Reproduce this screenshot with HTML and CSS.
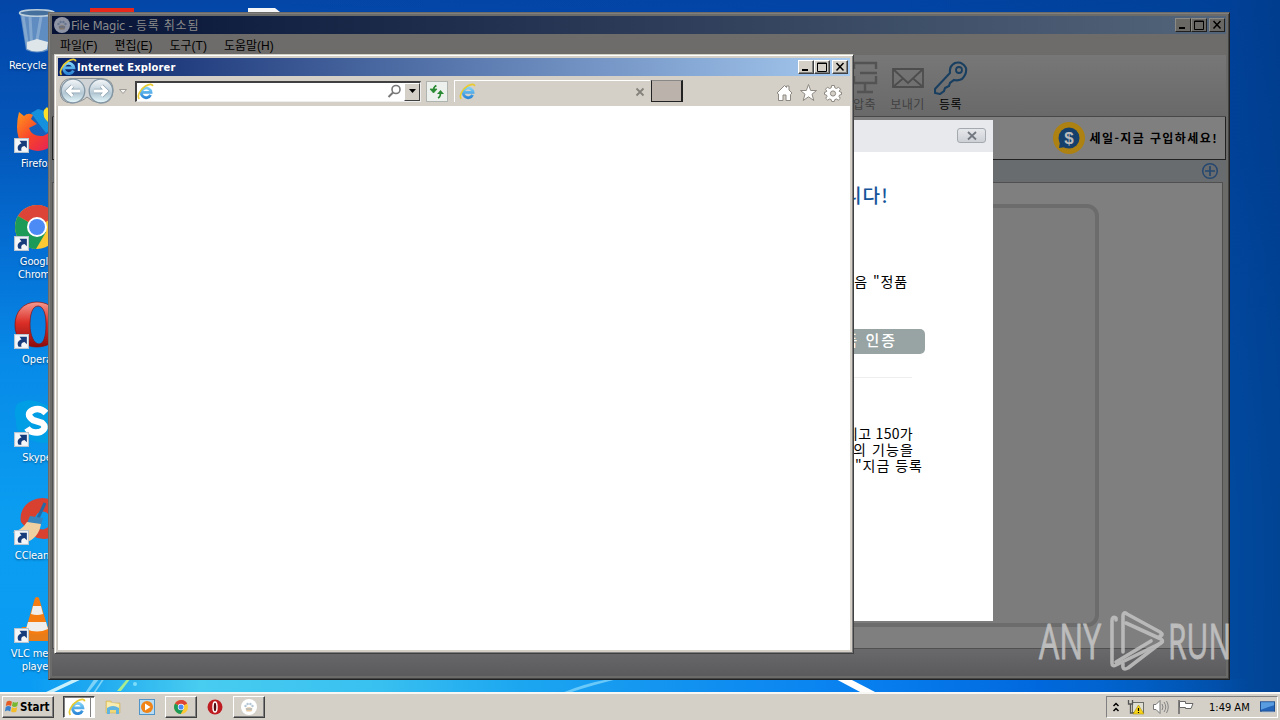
FILE: index.html
```html
<!DOCTYPE html>
<html lang="ko">
<head>
    <meta charset="UTF-8">
    <title>File Magic</title>
    <link rel="stylesheet" href="styles.css">
</head>
<body>
<svg width="0" height="0" class="defs">
    <defs>
        <linearGradient id="ieBlue" x1="0" y1="0" x2="0" y2="1"><stop offset="0" stop-color="#7cd0f8"/><stop offset="1" stop-color="#2c88d8"/></linearGradient>
        <linearGradient id="ball" x1="0" y1="0" x2="0" y2="1"><stop offset="0" stop-color="#f4f7f9"/><stop offset=".48" stop-color="#c3d2dc"/><stop offset=".6" stop-color="#b3c8d4"/><stop offset="1" stop-color="#e6f8fc"/></linearGradient>
        <linearGradient id="operaRed" x1="0" y1="0" x2="0" y2="1"><stop offset="0" stop-color="#f49a90"/><stop offset=".45" stop-color="#dc3028"/><stop offset="1" stop-color="#8c0c0c"/></linearGradient>
        <linearGradient id="fox" x1="0" y1="0" x2="1" y2="1"><stop offset="0" stop-color="#ff9a1c"/><stop offset=".5" stop-color="#f8402c"/><stop offset="1" stop-color="#e01c60"/></linearGradient>
    </defs>
    <symbol id="ie" viewBox="0 0 16 16">
        <path d="M12.8 11.2A4.6 4.6 0 1 1 13.2 8.8H5" fill="none" stroke="url(#ieBlue)" stroke-width="2.6"/>
        <path d="M2.2 15C-.2 13 2.6 6 8 2.8C11.5 .8 14.6 .6 14.8 3" fill="none" stroke="#e9cb30" stroke-width="1.5"/>
    </symbol>
    <symbol id="shortcut" viewBox="0 0 14 14">
        <rect x=".5" y=".5" width="13" height="13" fill="#f4f6f8" stroke="#b8c4d0"/>
        <path d="M4.3 12C2.4 8.6 4 5.8 7 5.2L5.2 2.5H12V9.5L9.8 7.4C7.2 7.8 6.2 9.4 7 12Z" fill="#173c7c"/>
    </symbol>
    <symbol id="chrome" viewBox="0 0 44 44">
        <circle cx="22" cy="22" r="22" fill="#fcc934"/>
        <path d="M22 22L3 11A22 22 0 0 1 41 11Z" fill="#dc4437"/>
        <path d="M22 0A22 22 0 0 1 41 11.5H22Z" fill="#dc4437"/>
        <path d="M3 11A22 22 0 0 0 21 44L31 27L22 22Z" fill="#1c9a58"/>
        <circle cx="22" cy="22" r="10" fill="#fff"/><circle cx="22" cy="22" r="8" fill="#4c8bf5"/>
    </symbol>
    <symbol id="paw" viewBox="0 0 16 16">
        <circle cx="8" cy="8" r="8" fill="#fff"/>
        <g fill="#b3c6d6"><circle cx="4.5" cy="7" r="1.2"/><circle cx="6.6" cy="5" r="1.2"/><circle cx="9.4" cy="5" r="1.2"/><circle cx="11.5" cy="7" r="1.2"/></g>
        <path d="M4.5 9.5Q8 7 11.5 9.5L10.5 12.5H5.5Z" fill="#e6c8a0"/><path d="M5 10H11" stroke="#9ab4c8"/>
    </symbol>
</svg>

<div class="desktop">
    <svg class="streaks" width="1280" height="16" viewBox="0 0 1280 16">
        <path d="M44 14L76 -1H84L52 14Z" fill="#c8f0fc"/><path d="M85 14L95 -1H100L88 14ZM93 14L103 -1H105L95 14Z" fill="#a4e4fa" opacity=".7"/>
        <path d="M117 12L128 -1H131L121 12Z" fill="#a8ec90"/><circle cx="135" cy="5" r="2" fill="#9cecfc" opacity=".7"/>
        <path d="M562 14Q585 4 615 -1H622Q592 6 569 14Z" fill="#8cdcfc" opacity=".7"/>
        <path d="M832 -2L862 14H877L850 0Z" fill="#fff"/>
    </svg>
    <svg class="peek" width="200" height="12" viewBox="0 0 200 12"><rect width="44" height="4" y="8" fill="#e8281c"/><path d="M158 8H185L190 12H158Z" fill="#f4f6f8"/></svg>

    <div class="shortcuts">
        <div class="shortcut">
            <svg width="48" height="48" viewBox="0 0 48 48"><path d="M7 7H41L36 44Q24 49 13 44Z" fill="#7098c4" opacity=".85"/><path d="M10 10L15 43M17 11L19 45M28 11L24 34" stroke="#c8dcec" stroke-width="3" opacity=".35"/><path d="M14 36L24 33L35 36L34 43Q24 48 14 43Z" fill="#dfe6ea"/><ellipse cx="24" cy="7" rx="17.5" ry="3.2" fill="#456f9c" stroke="#bdcfdd" stroke-width="1.5"/></svg>
            <span>Recycle Bin</span>
        </div>
        <div class="shortcut">
            <svg width="48" height="48" viewBox="0 0 48 48"><circle cx="27" cy="23" r="15" fill="#1460bc"/><path d="M18 9L25 5L39 9L42 23L33 29L26 20Z" fill="#1590dc"/><path d="M6 8L11 12Q15 8 20 11L18 15L24 20L16 24Q19 33 30 32Q38 30 40 18L44 22Q46 45 25 47Q4 45 4 23Q4 15 6 8Z" fill="url(#fox)"/><path d="M31 6Q29 13 35 18Q40 22 41 12L34 3Z" fill="#ffdf28"/></svg>
            <svg class="arrow" width="15" height="15"><use href="#shortcut"/></svg>
            <span>Firefox</span>
        </div>
        <div class="shortcut">
            <svg width="48" height="48" viewBox="0 0 48 48"><use href="#chrome" x="2" y="3" width="44" height="44"/></svg>
            <svg class="arrow" width="15" height="15"><use href="#shortcut"/></svg>
            <span>Google<br>Chrome</span>
        </div>
        <div class="shortcut">
            <svg width="48" height="48" viewBox="0 0 48 48"><path fill-rule="evenodd" d="M24 2C10 2 2 12 2 25S10 47 24 47S46 38 46 25S38 2 24 2ZM25 6C31 6 33 15 33 25S31 44 26 44S17 35 17 25S19 6 25 6Z" fill="url(#operaRed)" stroke="#871010" stroke-width=".7"/></svg>
            <svg class="arrow" width="15" height="15"><use href="#shortcut"/></svg>
            <span>Opera</span>
        </div>
        <div class="shortcut">
            <svg width="48" height="48" viewBox="0 0 48 48"><path d="M4 6Q16 -1 28 5Q46 10 44 26Q48 40 34 45Q24 45 18 42Q2 38 3 22Q0 13 4 6Z" fill="#009ee4"/><path d="M33 15Q27 9 20 12Q12 16 20 22L29 25Q35 30 27 34Q18 36 14 30" fill="none" stroke="#fff" stroke-width="6.5"/></svg>
            <svg class="arrow" width="15" height="15"><use href="#shortcut"/></svg>
            <span>Skype</span>
        </div>
        <div class="shortcut">
            <svg width="48" height="48" viewBox="0 0 48 48"><path d="M44 7A22 20 0 0 0 8 26L20 40Q32 47 44 38L36 30A8 9 0 1 1 36 19Z" fill="#d84030"/><path d="M32 7L25 22" stroke="#246aa4" stroke-width="3"/><path d="M17 20L30 22L28 29L14 27Z" fill="#3884bc"/><path d="M14 26L28 28Q26 42 12 47L0 36Q9 34 14 26Z" fill="#f0d0a0"/></svg>
            <svg class="arrow" width="15" height="15"><use href="#shortcut"/></svg>
            <span>CCleaner</span>
        </div>
        <div class="shortcut">
            <svg width="48" height="48" viewBox="0 0 48 48"><path d="M9 33H39L46 47H2Z" fill="#e87c18"/><path d="M22 4Q24 2 26 4L36 38Q24 43 12 38Z" fill="#f47c10"/><path d="M20 12H28L30 20Q24 22 18 20ZM15 28H33L35 35Q24 40 13 35Z" fill="#f0eeec"/></svg>
            <svg class="arrow" width="15" height="15"><use href="#shortcut"/></svg>
            <span>VLC media<br>player</span>
        </div>
    </div>

    <div class="window magic">
        <div class="titlebar">
            <svg width="16" height="16" class="dim"><use href="#paw"/></svg>
            <span class="title">File Magic - <b>등록 취소됨</b></span>
            <div class="controls">
                <button><svg width="14" height="12"><path d="M3 9H9" stroke="#000" stroke-width="2"/></svg></button>
                <button><svg width="14" height="12"><path d="M2.5 2H11.5V10.5H2.5ZM2 2.5H12" fill="none" stroke="#000"/></svg></button>
                <button class="close"><svg width="14" height="12"><path d="M3.5 2L10.5 9.5M10.5 2L3.5 9.5" stroke="#000" stroke-width="1.5"/></svg></button>
            </div>
        </div>
        <div class="menu"><span>파일(F)</span><span>편집(E)</span><span>도구(T)</span><span>도움말(H)</span></div>
        <div class="toolbar">
            <div class="tool">
                <svg width="32" height="34" viewBox="0 0 32 34"><path d="M5 2H27V8M11 12H28M5 22H27V15M16 22V30M8 31H24M5 2V8M5 22V15" fill="none" stroke="#535353" stroke-width="2.4"/></svg>
                <span>압축</span>
            </div>
            <div class="tool">
                <svg width="34" height="34" viewBox="0 0 34 34"><path d="M2 8H32V26H2ZM2 8L17 22L32 8M2 26L12 17.5M32 26L22 17.5" fill="none" stroke="#4d4d4d" stroke-width="1.8"/></svg>
                <span>보내기</span>
            </div>
            <div class="tool active">
                <svg width="34" height="34" viewBox="0 0 34 34"><path d="M16 12Q15 5 21 2Q28 0 32 7Q33 13 28 18Q24 20 20 19L16 22L15 25L11 27L10 30L6 33L1 32V28Z" fill="none" stroke="#183e60" stroke-width="2.1"/><circle cx="25" cy="9" r="3" fill="none" stroke="#183e60" stroke-width="1.8"/></svg>
                <span>등록</span>
            </div>
        </div>
        <div class="banner">
            <svg width="32" height="32" viewBox="0 0 32 32"><circle cx="16" cy="16" r="16" fill="#ad8112"/><circle cx="16" cy="16" r="10.5" fill="#16406c"/><path d="M7 20L6 26L13 25Z" fill="#16406c"/><text x="16" y="22" text-anchor="middle" class="dollar">$</text></svg>
            <span>세일-지금 구입하세요!</span>
        </div>
        <div class="tabstrip">
            <svg width="18" height="18" viewBox="0 0 18 18"><circle cx="9" cy="9" r="7.3" fill="none" stroke="#25476f" stroke-width="1.5"/><path d="M9 4V14M4 9H14" stroke="#25476f" stroke-width="1.7"/></svg>
        </div>
        <div class="work"><div class="dropzone"></div></div>
        <div class="status"></div>
    </div>

    <div class="dialog">
        <div class="dialog-head"><button><svg width="12" height="10"><path d="M2 1L10 8.5M10 1L2 8.5" stroke="#72777f" stroke-width="1.8"/></svg></button></div>
        <div class="dialog-body">
            <h1>합니다!</h1>
            <p class="hint">다음 "정품</p>
            <button class="activate">정품 인증</button>
            <hr>
            <p class="details"><span>그리고 150가</span><span>의 기능을</span><span class="last">"지금 등록</span></p>
        </div>
    </div>

    <div class="window ie">
        <div class="titlebar">
            <svg width="18" height="18"><use href="#ie"/></svg>
            <span class="title">Internet Explorer</span>
            <div class="controls">
                <button><svg width="14" height="12"><path d="M3 9H9" stroke="#000" stroke-width="2"/></svg></button>
                <button><svg width="14" height="12"><path d="M2.5 2H11.5V10.5H2.5ZM2 2.5H12" fill="none" stroke="#000"/></svg></button>
                <button class="close"><svg width="14" height="12"><path d="M3.5 2L10.5 9.5M10.5 2L3.5 9.5" stroke="#000" stroke-width="1.5"/></svg></button>
            </div>
        </div>
        <div class="navbar">
            <svg class="travel" width="72" height="28" viewBox="0 0 72 28">
                <path d="M13 1.5H43Q56 2 55 14Q54 27 42 26Q34 25 29 20Q24 25 14 26Q2 26 2 14Q2 2 13 1.5Z" fill="#cfd3d5" stroke="#8c9092"/>
                <circle cx="15" cy="14" r="11.8" fill="url(#ball)" stroke="#8296a4" stroke-width="1.3"/><circle cx="43" cy="14" r="11.8" fill="url(#ball)" stroke="#8296a4" stroke-width="1.3"/>
                <path d="M22 14H10M14.5 9L9.5 14L14.5 19M36 14H48M43.5 9L48.5 14L43.5 19" fill="none" stroke="#8da2b0" stroke-width="4.4"/>
                <path d="M22 14H10M14.5 9L9.5 14L14.5 19M36 14H48M43.5 9L48.5 14L43.5 19" fill="none" stroke="#fff" stroke-width="3"/>
                <path d="M61.5 12.5H68.5L65 16.5Z" fill="#f4f4f2" stroke="#a09c96"/>
            </svg>
            <div class="address">
                <svg width="17" height="17"><use href="#ie"/></svg>
                <svg class="search" width="15" height="15" viewBox="0 0 15 15"><circle cx="9" cy="5.5" r="4" fill="none" stroke="#777" stroke-width="1.6"/><path d="M6 8.5L1.5 13" stroke="#777" stroke-width="2"/></svg>
                <button><svg width="9" height="5"><path d="M1 0H8L4.5 4Z"/></svg></button>
            </div>
            <div class="refresh"><svg width="18" height="18" viewBox="0 0 18 18"><path d="M8 2Q5.5 3 5.5 7M2 6H9L5.5 10Z" fill="#2a8a34" stroke="#2a8a34" stroke-width=".8"/><path d="M8.500 3Q6 3 5.500 7M10 15Q12.500 14 12.500 10" fill="none" stroke="#2a8a34" stroke-width="1.6"/><path d="M9 11H16L12.500 7Z" fill="#2a8a34"/></svg></div>
            <div class="tab">
                <svg width="17" height="17"><use href="#ie"/></svg>
                <svg width="10" height="10"><path d="M1.5 1.5L8.5 8.5M8.5 1.5L1.5 8.5" stroke="#85817b" stroke-width="1.8"/></svg>
            </div>
            <div class="newtab"></div>
            <svg class="commands" width="68" height="20" viewBox="0 0 68 20" fill="#fff" stroke="#8d8982">
                <path d="M2 10L9.5 2.5L11.5 4.5V3H14V7L17 10L15.5 11.5V17.5H11V12H8V17.5H3.5V11Z"/>
                <path d="M33.5 1.5L35.7 7.5H41.5L37 11.2L38.8 17.5L33.5 13.8L28.2 17.5L30 11.2L25.5 7.5H31.3Z"/>
                <path d="M56.6 2.5H59.4L59.8 4.8L61.5 5.5L63.5 4.2L65.5 6.2L64.2 8.2L65 9L66.5 9.2V11.5L64.5 12L64 13.5L65.3 15.3L63.3 17.2L61.5 16L59.8 16.6L59.3 18.5H56.7L56.2 16.6L54.5 16L52.7 17.2L50.7 15.3L52 13.5L51.5 12L49.5 11.5V9.2L51 9L51.8 8.2L50.5 6.2L52.5 4.2L54.5 5.5L56.2 4.8Z"/><circle cx="58" cy="10.5" r="2.6" fill="#d4d0c8"/>
            </svg>
        </div>
        <div class="viewport"></div>
    </div>

    <svg class="watermark" width="200" height="66" viewBox="0 0 200 66">
        <g class="brand"><text x="4" y="51" textLength="62" lengthAdjust="spacingAndGlyphs">ANY</text><text x="133" y="51" textLength="63" lengthAdjust="spacingAndGlyphs">RUN</text></g>
        <g fill="none" stroke="#c4c4c4" stroke-width="3.6" stroke-linejoin="round" stroke-linecap="round"><path d="M81 12V10Q77 8 77 13V55Q77 59 81 57L126 35Q129 33 126 31L91 15"/><path d="M88 44V8Q88 3 92 6L125 24Q129 27 125 28"/><path d="M81 54L116 33M88 56Q87 63 93 60L127 34"/></g>
    </svg>
</div>

<div class="taskbar">
    <button class="start"><svg width="15" height="16" viewBox="0 0 17 16"><path d="M3 2Q6 0 9 2L8 7Q5 5 2 7Z" fill="#e45c24"/><path d="M10 2Q13 4 16 2L15 7Q12 9 9 7Z" fill="#78b830"/><path d="M2 8Q5 6 8 8L7 13Q4 11 1 13Z" fill="#3880cc"/><path d="M9 8Q12 10 15 8L14 13Q11 15 8 13Z" fill="#f4bc28"/></svg>Start</button>
    <div class="tasks">
        <div class="task pressed"><svg width="18" height="18"><use href="#ie"/></svg></div>
        <div class="task"><svg width="18" height="18" viewBox="0 0 18 18"><path d="M2 3H7L8 5H16V15H2Z" fill="#f0d878" stroke="#cdb060" stroke-width=".6"/><path d="M3 4L15 6V10H3Z" fill="#f8ecb0"/><path d="M3 16V10Q9 6 15 10V16H12V12H6V16Z" fill="#60b4e0"/></svg></div>
        <div class="task"><svg width="18" height="18" viewBox="0 0 18 18"><rect x="1.5" y="1.5" width="15" height="15" fill="#b8dcf4" stroke="#5094c8"/><circle cx="9" cy="9" r="6" fill="#f08418"/><path d="M7 5.5L12.5 9L7 12.5Z" fill="#fff"/></svg></div>
        <div class="task raised"><svg width="14" height="14"><use href="#chrome"/></svg></div>
        <div class="task"><svg width="16" height="16" viewBox="0 0 16 16"><circle cx="8" cy="8" r="7.5" fill="#be1c20"/><ellipse cx="8" cy="8" rx="2" ry="5" fill="#500c10" stroke="#fff" stroke-width="1.5"/></svg></div>
        <div class="task raised"><svg width="16" height="16"><use href="#paw"/></svg></div>
    </div>
    <div class="tray">
        <svg width="8" height="11" viewBox="0 0 8 11"><path d="M1.5 4L4 1.5L6.5 4M1.5 9L4 6.5L6.5 9" fill="none" stroke="#000" stroke-width="1.5"/></svg>
        <svg width="18" height="16" viewBox="0 0 18 16"><rect x="5.5" y="3.5" width="11" height="10" fill="#e0dfd4" stroke="#6c6c68"/><path d="M1.5 1V5H5.5V1M3.5 5V14H7" fill="none" stroke="#555" stroke-width="1.3"/><path d="M11.5 6L17 15H6Z" fill="#f8d418" stroke="#9c8400" stroke-width=".5"/><path d="M11.5 9V12M11.5 13V14" stroke="#000" stroke-width="1.2"/></svg>
        <svg width="18" height="16" viewBox="0 0 18 16"><path d="M1.5 5.5H4L8 1.5V14.5L4 10.5H1.5Z" fill="#fff" stroke="#777"/><path d="M10 5Q12 8 10 11M12 3Q15.5 8 12 13M14.5 2Q18 8 14.5 14" fill="none" stroke="#858585"/></svg>
        <svg width="17" height="16" viewBox="0 0 17 16"><path d="M2 1V15" stroke="#666" stroke-width="1.5"/><path d="M2.5 2.5H8.5V4.5H16L14 9.5H8.5V8.5H2.5Z" fill="#fff" stroke="#666"/></svg>
        <span class="clock">1:49 AM</span>
        <svg width="15" height="14" viewBox="0 0 16 14"><rect x=".5" y="1.5" width="15" height="10" fill="#2464b8" stroke="#18498c"/><path d="M1 2H15V5L1 10Z" fill="#5a9ce0"/><path d="M2 12.5H15" stroke="#b8c8d8"/></svg>
    </div>
</div>
</body>
</html>
```
FILE: styles.css
```css
* { box-sizing: border-box; }
body {
    margin: 0;
    width: 1280px;
    height: 720px;
    overflow: hidden;
    display: flex;
    flex-direction: column;
    font: 11px "DejaVu Sans Condensed", "Noto Sans CJK KR", sans-serif;
    color: #000;
}
button { font: inherit; padding: 0; border: 0; }
svg { display: block; flex: none; }
h1, p { margin: 0; font-weight: normal; }
.defs { position: absolute; }

/* Desktop */
.desktop {
    position: relative;
    height: 692px;
    overflow: hidden;
    background:
        linear-gradient(90deg, transparent 30px, #1ea8f0 90px, #48ccf0 200px, #38c0f0 380px, #1ca6f0 520px, #108ef0 720px, #0880f0 860px, #0068dc 1040px, rgba(0, 86, 188, 0) 1250px) bottom / 100% 13px no-repeat,
        linear-gradient(90deg, transparent 0, transparent 22%, rgba(0, 64, 160, .45) 68%, rgba(0, 64, 150, .88) 95%, rgba(0, 60, 140, .92) 100%),
        linear-gradient(180deg, #0346a8 0, #0455b8 19%, #046fd4 36%, #078ae8 52%, #0a9df0 74%, #0a9cf4 100%);
}
.streaks { position: absolute; left: 0; top: 679px; }
.peek { position: absolute; left: 90px; top: 0; }
.shortcuts { position: absolute; left: 0; top: 6px; width: 74px; }
.shortcut {
    position: relative;
    height: 98px;
    display: flex;
    flex-direction: column;
    align-items: center;
    color: #fff;
    line-height: 13px;
    text-align: center;
    text-shadow: 0 1px 2px rgba(0, 20, 50, .6);
    white-space: nowrap;
}
.shortcut > span { margin-top: 5px; letter-spacing: -.1px; }
.shortcut .arrow { position: absolute; left: 14px; top: 34px; }

/* Window frames */
.window { position: absolute; display: flex; flex-direction: column; }
.titlebar {
    height: 18px;
    flex: none;
    display: flex;
    align-items: center;
    padding: 0 2px;
    color: #fff;
    font-weight: bold;
}
.title { flex: 1; white-space: nowrap; }
.controls { display: flex; }
.controls button {
    width: 16px;
    height: 14px;
    background: #d4d0c8;
    border: 1px solid;
    border-color: #fff #404040 #404040 #fff;
    box-shadow: inset -1px -1px #808080;
}
.controls .close { margin-left: 2px; }

.magic {
    left: 48px;
    top: 12px;
    width: 1182px;
    height: 668px;
    padding: 3px;
    background: #6b6b69;
    border: 1px solid;
    border-color: #6d6b67 #222 #222 #6d6b67;
    box-shadow: inset 1px 1px #7f7f7f, inset -1px -1px #444;
}
.magic .titlebar { background: linear-gradient(90deg, #051236, #53657a); color: #8a8a8a; }
.magic .title { font: 11.5px "DejaVu Sans", sans-serif; letter-spacing: -.25px; }
.magic .title b { font: 12px/16px "Noto Sans CJK KR", sans-serif; letter-spacing: .8px; }
.magic .controls { margin-right: -1px; }
.magic .controls button { background: #6a6864; border-color: #8c8a84 #202020 #202020 #8c8a84; box-shadow: none; }
.dim { opacity: .55; margin-right: 1px; }
.menu {
    height: 21px;
    flex: none;
    display: flex;
    align-items: center;
    gap: 17px;
    padding-left: 8px;
    background: #6e6c6a;
    font: 12px "Liberation Sans", "Noto Sans CJK KR", sans-serif;
}
.toolbar {
    height: 62px;
    flex: none;
    display: flex;
    justify-content: flex-end;
    gap: 4px;
    padding: 6px 256px 0 0;
    background: linear-gradient(#777, #696969);
    border-bottom: 1px solid #484848;
}
.tool {
    width: 39px;
    display: flex;
    flex-direction: column;
    align-items: center;
    color: #414141;
    font: 12px/17px "Noto Sans CJK KR", sans-serif;
    letter-spacing: .5px;
    white-space: nowrap;
}
.tool.active { color: #000; }
.banner {
    height: 43px;
    flex: none;
    display: flex;
    align-items: center;
    justify-content: flex-end;
    gap: 5px;
    padding: 0 7px 1px 0;
    background: #7f7f7f;
    border: 1px solid #222;
    border-top: 0;
    font: bold 12px "Noto Sans CJK KR", sans-serif;
    letter-spacing: 1.4px;
}
.dollar { font: bold 17px "Liberation Sans", sans-serif; letter-spacing: 0; fill: #bbb; }
.tabstrip {
    height: 22px;
    flex: none;
    display: flex;
    align-items: center;
    justify-content: flex-end;
    padding-right: 7px;
    background: #696c6e;
}
.work {
    height: 467px;
    flex: none;
    margin-right: 3px;
    padding: 21px 123px 21px 120px;
    background: #7f7f7f;
    border: 1px solid #505050;
}
.dropzone { height: 100%; border: 4px solid #6c6c6c; border-radius: 12px; background: #7c7c7c; }
.status { flex: 1; background: linear-gradient(#69696b, #5b5b5d); }

/* Registration dialog */
.dialog { position: absolute; left: 300px; top: 120px; width: 693px; height: 501px; background: #fff; }
.dialog-head { height: 32px; padding: 8px 7px; display: flex; justify-content: flex-end; background: #e8e9ed; }
.dialog-head button {
    width: 29px;
    height: 15px;
    display: flex;
    align-items: center;
    justify-content: center;
    border: 1px solid #a4a9b0;
    border-radius: 3px;
    background: linear-gradient(#e6e8eb, #cdd0d5);
}
.dialog-body { display: flex; flex-direction: column; align-items: flex-end; font-family: "Noto Sans CJK KR", sans-serif; }
.dialog h1 { font-size: 19px; line-height: 28px; margin: 29px 104px 0 0; color: #16549a; font-weight: 500; letter-spacing: 1.2px; }
.hint { font-size: 14px; line-height: 20px; margin: 62px 85px 0 0; letter-spacing: .9px; }
.activate {
    width: 160px;
    height: 25px;
    margin: 38px 68px 0 0;
    padding: 0 28px 4px 0;
    text-align: right;
    border-radius: 5px;
    background: #98a3a3;
    color: #fff;
    font-size: 15px;
    font-weight: 500;
    line-height: 20px;
    letter-spacing: 2px;
}
.dialog hr { width: 400px; margin: 23px 81px 0 0; border: 0; border-top: 1px solid #eee; }
.details { display: flex; flex-direction: column; align-items: flex-end; margin: 47px 70px 0 0; font-size: 14px; line-height: 16px; }
.details span { margin-right: 10px; letter-spacing: .3px; }
.details span:nth-child(2) { letter-spacing: 1.1px; margin-right: 9px; }
.details .last { margin-right: 0; letter-spacing: 1px; }

/* Internet Explorer */
.ie {
    left: 54px;
    top: 54px;
    width: 800px;
    height: 600px;
    padding: 3px;
    background: #d4d0c8;
    border: 1px solid;
    border-color: #d4d0c8 #404040 #404040 #d4d0c8;
    box-shadow: inset 1px 1px #fff, inset -1px -1px #808080;
}
.ie .titlebar { padding: 0 2px 0 1px; background: linear-gradient(90deg, #0a246a, #a6caf0); }
.ie .title { letter-spacing: .15px; }
.navbar { height: 30px; flex: none; display: flex; align-items: center; padding-left: 1px; }
.travel { margin-left: -1px; }
.address {
    width: 286px;
    height: 21px;
    margin-left: 5px;
    display: flex;
    align-items: center;
    background: #fff;
    border: 1px solid #404040;
    border-width: 2px 1px 1px 2px;
    border-right-color: #eee;
    border-bottom-color: #eee;
}
.search { margin-left: auto; }
.address button {
    width: 16px;
    height: 18px;
    margin-left: 2px;
    display: flex;
    align-items: center;
    justify-content: center;
    background: #d4d0c8;
    border: 1px solid;
    border-color: #fff #404040 #404040 #fff;
}
.refresh { width: 22px; height: 21px; margin: 0 6px 0 5px; padding: 1px; background: #edf1ed; border: 1px solid #b0b4b0; }
.tab {
    width: 196px;
    height: 22px;
    display: flex;
    align-items: center;
    justify-content: space-between;
    padding: 0 5px 0 4px;
    border-left: 1px solid #fff;
    border-top: 1px solid #fff;
}
.newtab { width: 32px; height: 22px; margin-left: 1px; background: #bbb3ab; border: 1px solid #222; border-top-color: #888; border-right-width: 2px; }
.commands { margin: 3px 7px 0 auto; }
.viewport { flex: 1; background: #fff; border-left: 1px solid #c8c4bc; margin-left: -1px; }

.watermark { position: absolute; left: 1035px; top: 608px; opacity: .85; }
.brand { font: 49px "Open Sans", sans-serif; fill: #c8c8c8; stroke: #c8c8c8; stroke-width: .9px; }

/* Taskbar */
.taskbar {
    height: 28px;
    display: flex;
    align-items: center;
    padding: 2px;
    background: #d4d0c8;
    border-top: 2px solid #f8f7f4;
}
.start {
    width: 52px;
    height: 22px;
    display: flex;
    align-items: center;
    gap: 1px;
    padding-left: 1px;
    background: #d4d0c8;
    border: 1px solid;
    border-color: #fff #404040 #404040 #fff;
    box-shadow: inset -1px -1px #808080;
    font-weight: bold;
    font-size: 11.5px;
}
.tasks { display: flex; margin-left: 9px; gap: 2px; }
.task { width: 32px; height: 22px; display: flex; align-items: center; justify-content: center; }
.task.pressed { padding-right: 4px; background: linear-gradient(90deg, #fff 26px, #808080 26px, #808080 27px, #fff 27px); border: 1px solid; border-color: #404040 #fff #fff #404040; box-shadow: inset 1px 1px #808080; }
.task.raised { border: 1px solid; border-color: #fff #404040 #404040 #fff; box-shadow: inset -1px -1px #808080; }
.tray {
    margin-left: auto;
    width: 172px;
    height: 22px;
    display: flex;
    align-items: center;
    gap: 7px;
    padding-left: 5px;
    border: 1px solid;
    border-color: #808080 #fff #fff #808080;
}
.clock { margin: 0 3px 0 8px; white-space: nowrap; }
```
